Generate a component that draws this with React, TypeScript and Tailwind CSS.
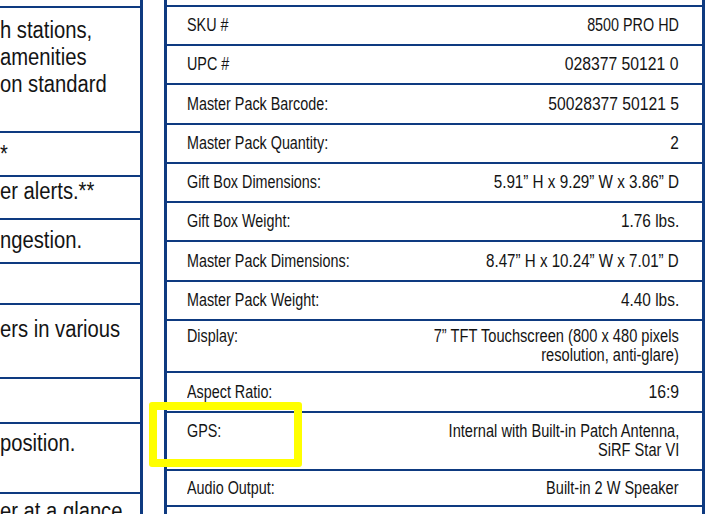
import React from "react";

const rows: { l: string; v: string[]; h: string; s: string }[] = [
  { l: "SKU #", v: ["8500 PRO HD"], h: "h-[39px]", s: "scale-x-[0.82]" },
  { l: "UPC #", v: ["028377 50121 0"], h: "h-[39px]", s: "scale-x-[0.9]" },
  { l: "Master Pack Barcode:", v: ["50028377 50121 5"], h: "h-[40px]", s: "scale-x-[0.895]" },
  { l: "Master Pack Quantity:", v: ["2"], h: "h-[39px]", s: "scale-x-[0.88]" },
  { l: "Gift Box Dimensions:", v: ["5.91\u201D H x 9.29\u201D W x 3.86\u201D D"], h: "h-[39px]", s: "scale-x-[0.87]" },
  { l: "Gift Box Weight:", v: ["1.76 lbs."], h: "h-[39px]", s: "scale-x-[0.88]" },
  { l: "Master Pack Dimensions:", v: ["8.47\u201D H x 10.24\u201D W x 7.01\u201D D"], h: "h-[40px]", s: "scale-x-[0.865]" },
  { l: "Master Pack Weight:", v: ["4.40 lbs."], h: "h-[39px]", s: "scale-x-[0.88]" },
  { l: "Display:", v: ["7\u201D TFT Touchscreen (800 x 480 pixels", "resolution, anti-glare)"], h: "h-[52px]", s: "scale-x-[0.837]" },
  { l: "Aspect Ratio:", v: ["16:9"], h: "h-[40px]", s: "scale-x-[0.9]" },
  { l: "GPS:", v: ["Internal with Built-in Patch Antenna,", "SiRF Star VI"], h: "h-[58px]", s: "scale-x-[0.835]" },
  { l: "Audio Output:", v: ["Built-in 2 W Speaker"], h: "h-[36px]", s: "scale-x-[0.83]" },
  { l: "", v: [""], h: "h-[40px]", s: "scale-x-[0.82]" },
];

const leftCells: { lines: string[]; h: string; pt: string }[] = [
  { lines: ["h stations,", "amenities", "on standard"], h: "h-[125px]", pt: "pt-[9px]" },
  { lines: ["*"], h: "h-[44px]", pt: "pt-[8px]" },
  { lines: ["er alerts.**"], h: "h-[43px]", pt: "pt-[1px]" },
  { lines: ["ngestion."], h: "h-[44px]", pt: "pt-[7px]" },
  { lines: [], h: "h-[41px]", pt: "pt-[6px]" },
  { lines: ["ers in various"], h: "h-[74px]", pt: "pt-[11px]" },
  { lines: [], h: "h-[45px]", pt: "pt-[6px]" },
  { lines: ["position."], h: "h-[70px]", pt: "pt-[6px]" },
  { lines: ["er at a glance"], h: "h-[60px]", pt: "pt-[4px]" },
];

const font = {
  fontFamily: '"Liberation Sans", Arial, sans-serif',
};

export default function App() {
  return (
    <div className="relative w-[727px] h-[514px] overflow-hidden bg-white text-[#141414]" style={font}>
      <div className="flex items-start">
        {/* left column */}
        <div className="w-[143px] shrink-0 border-r-[3px] border-[#0e3a80] h-[514px]">
          <div className="h-[8px] border-b-2 border-[#0e3a80]" />
          {leftCells.map((c, i) => (
            <div
              key={i}
              className={`${c.h} ${c.pt} border-b-2 border-[#0e3a80] overflow-hidden text-[23.5px] leading-[27px] whitespace-nowrap`}
            >
              {c.lines.map((t, j) => (
                <div key={j} className="origin-left scale-x-[0.86]">
                  {t}
                </div>
              ))}
            </div>
          ))}
        </div>
        {/* gap */}
        <div className="w-[21px] shrink-0" />
        {/* right table */}
        <div className="w-[541px] shrink-0 border-x-[3px] border-[#0e3a80] h-[514px]">
          <div className="h-[7px] border-b-2 border-[#0e3a80]" />
          {rows.map((r, i) => (
            <div
              key={i}
              className={`${r.h} border-b-2 border-[#0e3a80] flex items-center pl-[20px] pr-[23px] text-[17.5px] leading-[19px]`}
            >
              <div className="flex w-full items-start justify-between">
                <div className="whitespace-nowrap origin-left scale-x-[0.82]">{r.l}</div>
                <div className={`text-right whitespace-nowrap origin-right ${r.s}`}>
                  {r.v.map((t, j) => (
                    <div key={j}>{t}</div>
                  ))}
                </div>
              </div>
            </div>
          ))}
        </div>
      </div>
      {/* yellow highlight */}
      <div className="absolute left-[149px] top-[402px] w-[153px] h-[65px] border-[8px] border-[#ffff00] rounded-[3px]" />
    </div>
  );
}
